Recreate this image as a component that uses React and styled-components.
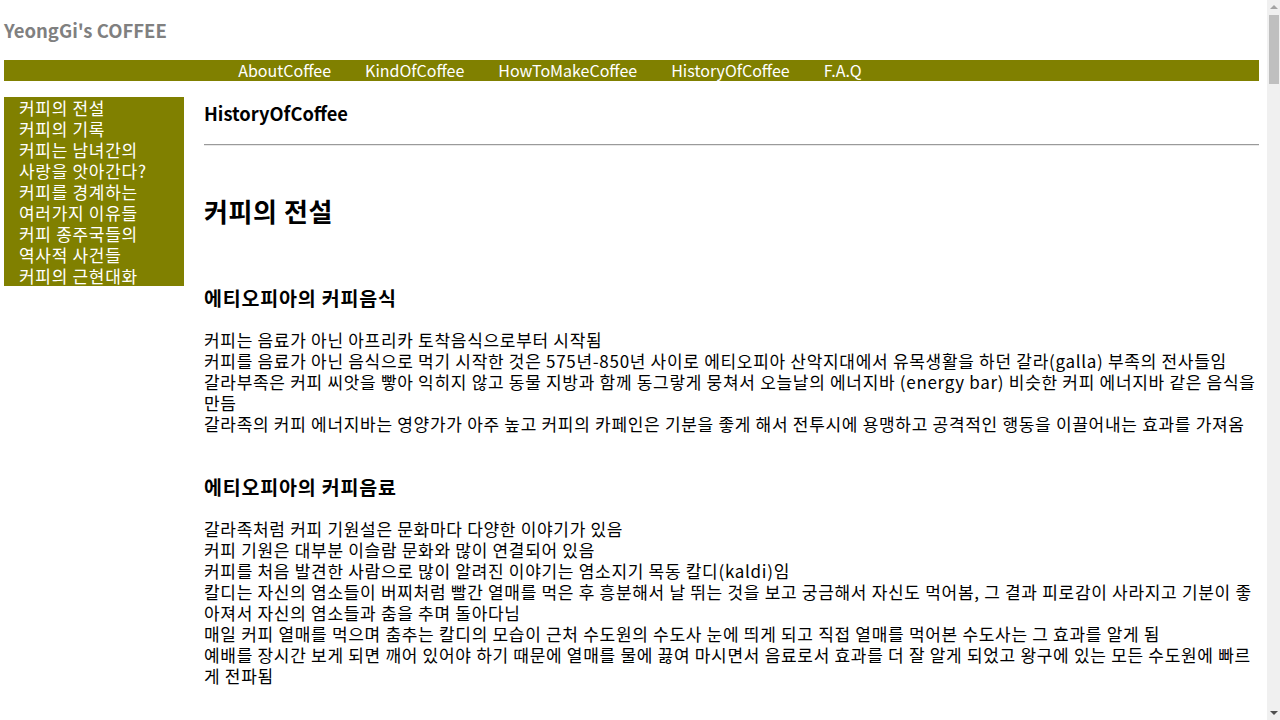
import React from "react";
import styled, { createGlobalStyle } from "styled-components";

const GlobalStyle = createGlobalStyle`
  body {
    margin: 0;
    background: #ffffff;
    color: #000000;
    font-family: "Noto Sans CJK KR", "Noto Sans", sans-serif;
    font-size: 17px;
    letter-spacing: 0.7px;
    line-height: 21px;
  }
`;

const Page = styled.div`
  width: 1255px;
  padding: 0 0 40px 4px;
`;

const Header = styled.header`
  height: 60px;
  display: flex;
  align-items: center;
`;

const Logo = styled.h1`
  margin: 0;
  font-size: 18.5px;
  line-height: 25px;
  letter-spacing: 0;
  font-weight: bold;
  color: #808080;
`;

const NavBar = styled.nav`
  background: #808000;
  height: 21px;
`;

const NavList = styled.ul`
  list-style: none;
  margin: 0;
  padding: 0 163px 0 0;
  height: 100%;
  display: flex;
  justify-content: center;
  align-items: center;
  gap: 34px;
`;

const NavItem = styled.li`
  color: #ffffff;
  font-size: 16px;
  letter-spacing: 0;
  line-height: 21px;
  white-space: nowrap;
`;

const Body = styled.div`
  display: flex;
  align-items: flex-start;
  gap: 20px;
  margin-top: 16px;
`;

const Sidebar = styled.ul`
  list-style: none;
  margin: 0;
  padding: 0 0 0 15px;
  width: 165px;
  flex-shrink: 0;
  background: #808000;
`;

const SideItem = styled.li`
  color: #ffffff;
  line-height: 21px;
  white-space: nowrap;
`;

const Main = styled.main`
  flex: 1;
  min-width: 0;
`;

const PageTitle = styled.h3`
  margin: 0;
  font-size: 18.3px;
  letter-spacing: 0;
  line-height: 32px;
  font-weight: bold;
`;

const Rule = styled.hr`
  margin: 15px 0 0;
  border: none;
  border-top: 1px solid #9a9a9a;
  border-bottom: 1px solid #e8e8e8;
`;

const SectionTitle = styled.h2`
  margin: 49px 0 0;
  font-size: 26px;
  letter-spacing: 0.6px;
  line-height: 32px;
  font-weight: bold;
`;

const Topic = styled.h4`
  margin: ${({ $first }) => ($first ? "58px" : "40px")} 0 0;
  font-size: 19.5px;
  letter-spacing: 0.8px;
  line-height: 25px;
  font-weight: bold;
`;

const Para = styled.p`
  margin: 19px 0 0;
  line-height: 21px;
`;

const Line = styled.span`
  display: block;
`;

const ScrollTrack = styled.div`
  position: fixed;
  top: 0;
  right: 0;
  bottom: 0;
  width: 13px;
  background: #f0f0f0;
`;

const ScrollThumb = styled.div`
  position: absolute;
  top: 15px;
  left: 2px;
  right: 1px;
  height: 69px;
  background: #bfbfbf;
`;

const Arrow = styled.div`
  position: absolute;
  left: 3px;
  width: 0;
  height: 0;
  border-left: 4px solid transparent;
  border-right: 4px solid transparent;
  ${({ $down }) =>
    $down
      ? "bottom: 5px; border-top: 4px solid #505050;"
      : "top: 5px; border-bottom: 4px solid #a3a3a3;"}
`;

const menu = ["AboutCoffee", "KindOfCoffee", "HowToMakeCoffee", "HistoryOfCoffee", "F.A.Q"];

const side = [
  "커피의 전설",
  "커피의 기록",
  "커피는 남녀간의",
  "사랑을 앗아간다?",
  "커피를 경계하는",
  "여러가지 이유들",
  "커피 종주국들의",
  "역사적 사건들",
  "커피의 근현대화"
];

const sections = [
  {
    title: "커피의 전설",
    topics: [
      {
        title: "에티오피아의 커피음식",
        lines: [
          "커피는 음료가 아닌 아프리카 토착음식으로부터 시작됨",
          "커피를 음료가 아닌 음식으로 먹기 시작한 것은 575년-850년 사이로 에티오피아 산악지대에서 유목생활을 하던 갈라(galla) 부족의 전사들임",
          "갈라부족은 커피 씨앗을 빻아 익히지 않고 동물 지방과 함께 동그랗게 뭉쳐서 오늘날의 에너지바 (energy bar) 비슷한 커피 에너지바 같은 음식을 만듬",
          "갈라족의 커피 에너지바는 영양가가 아주 높고 커피의 카페인은 기분을 좋게 해서 전투시에 용맹하고 공격적인 행동을 이끌어내는 효과를 가져옴"
        ]
      },
      {
        title: "에티오피아의 커피음료",
        lines: [
          "갈라족처럼 커피 기원설은 문화마다 다양한 이야기가 있음",
          "커피 기원은 대부분 이슬람 문화와 많이 연결되어 있음",
          "커피를 처음 발견한 사람으로 많이 알려진 이야기는 염소지기 목동 칼디(kaldi)임",
          "칼디는 자신의 염소들이 버찌처럼 빨간 열매를 먹은 후 흥분해서 날 뛰는 것을 보고 궁금해서 자신도 먹어봄, 그 결과 피로감이 사라지고 기분이 좋아져서 자신의 염소들과 춤을 추며 돌아다님",
          "매일 커피 열매를 먹으며 춤추는 칼디의 모습이 근처 수도원의 수도사 눈에 띄게 되고 직접 열매를 먹어본 수도사는 그 효과를 알게 됨",
          "예배를 장시간 보게 되면 깨어 있어야 하기 때문에 열매를 물에 끓여 마시면서 음료로서 효과를 더 잘 알게 되었고 왕구에 있는 모든 수도원에 빠르게 전파됨"
        ]
      },
      {
        title: "아라비아의 커피",
        lines: [
          "커피는 예멘을 통해 아라비아 반도로 전해짐",
          "이슬람 수도승들은 밤샘 기도를 위해 커피를 마셨고 커피는 종교 의식의 일부가 됨",
          "메카와 메디나를 거쳐 커피는 이슬람 세계 전역으로 퍼져 나감"
        ]
      }
    ]
  },
  {
    title: "커피의 기록",
    topics: [
      {
        title: "최초의 기록",
        lines: [
          "커피에 대한 최초의 기록은 페르시아의 의사 라제스(Rhazes)가 남긴 의학서에 등장함",
          "라제스는 커피를 번컴(bunchum)이라 부르며 위에 좋은 약으로 소개함",
          "이후 아비센나(Avicenna)도 커피의 효능에 대해 기록을 남김"
        ]
      },
      {
        title: "커피하우스의 등장",
        lines: [
          "15세기 메카에 최초의 커피하우스가 생겨남",
          "커피하우스는 사람들이 모여 대화하고 음악을 즐기는 사교의 장소가 됨",
          "1554년 이스탄불에 문을 연 커피하우스는 큰 인기를 얻음"
        ]
      }
    ]
  }
];

export default function App() {
  return (
    <>
      <GlobalStyle />
      <Page>
        <Header>
          <Logo>YeongGi's COFFEE</Logo>
        </Header>
        <NavBar>
          <NavList>
            {menu.map(m => (
              <NavItem key={m}>{m}</NavItem>
            ))}
          </NavList>
        </NavBar>
        <Body>
          <Sidebar>
            {side.map(s => (
              <SideItem key={s}>{s}</SideItem>
            ))}
          </Sidebar>
          <Main>
            <PageTitle>HistoryOfCoffee</PageTitle>
            <Rule />
            {sections.map(sec => (
              <section key={sec.title}>
                <SectionTitle>{sec.title}</SectionTitle>
                {sec.topics.map((t, i) => (
                  <div key={t.title}>
                    <Topic $first={i === 0}>{t.title}</Topic>
                    <Para>
                      {t.lines.map(l => (
                        <Line key={l}>{l}</Line>
                      ))}
                    </Para>
                  </div>
                ))}
              </section>
            ))}
          </Main>
        </Body>
      </Page>
      <ScrollTrack>
        <Arrow />
        <ScrollThumb />
        <Arrow $down />
      </ScrollTrack>
    </>
  );
}
